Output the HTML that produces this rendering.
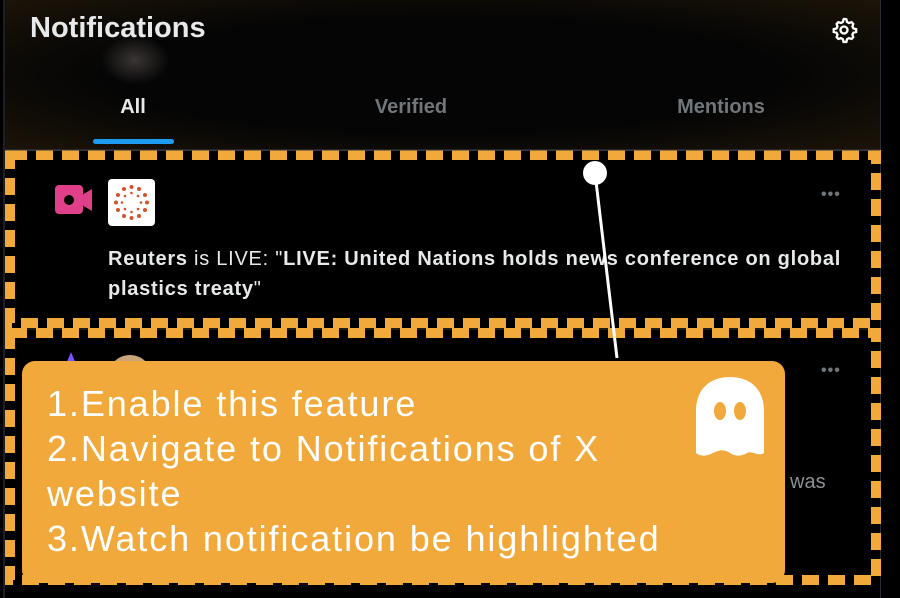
<!DOCTYPE html>
<html><head><meta charset="utf-8"><style>
*{margin:0;padding:0;box-sizing:border-box}
body{width:900px;height:598px;background:#000;overflow:hidden;position:relative;font-family:"Liberation Sans",sans-serif}
.hdr{position:absolute;left:5px;top:0;width:875px;height:150px;background:radial-gradient(ellipse at 50% 50%,#050505 55%,#1c1408 100%)}
.blur{position:absolute;left:95px;top:35px;width:70px;height:50px;border-radius:50%;background:radial-gradient(#3a3534,transparent 70%)}
.abs{position:absolute}
.t{color:#e7e9ea;font-weight:bold}
.tab{position:absolute;top:96px;font-size:20px;font-weight:bold;color:#71767b;transform:translateX(-50%)}
</style></head><body>
<div class="abs" style="left:3px;top:0;width:2px;height:598px;background:#1e1f26"></div>
<div class="abs" style="left:880px;top:0;width:1px;height:598px;background:#2a2d33"></div>
<div class="hdr"><div class="blur"></div></div>
<div class="abs t" style="left:30px;top:12px;font-size:29px">Notifications</div>
<svg class="abs" style="left:830px;top:16px" width="28" height="28" viewBox="0 0 24 24"><path fill="none" stroke="#fff" stroke-width="2" d="M12 2.5l2 .3.6 2.3 1.6.9 2.3-.7 1.4 1.5-.7 2.3.9 1.6 2.3.6v2.4l-2.3.6-.9 1.6.7 2.3-1.4 1.5-2.3-.7-1.6.9-.6 2.3h-2.4l-.6-2.3-1.6-.9-2.3.7-1.4-1.5.7-2.3-.9-1.6-2.3-.6v-2.4l2.3-.6.9-1.6-.7-2.3 1.4-1.5 2.3.7 1.6-.9.6-2.3z"/><circle cx="12" cy="12" r="3" fill="none" stroke="#fff" stroke-width="2"/></svg>
<div class="tab" style="left:133px;color:#e7e9ea">All</div>
<div class="tab" style="left:411px">Verified</div>
<div class="tab" style="left:721px">Mentions</div>
<div class="abs" style="left:93px;top:139px;width:81px;height:5px;border-radius:3px;background:#1d9bf0"></div>
<div class="abs" style="left:5px;top:150px;width:875px;height:1px;background:#2f3336"></div>

<svg class="abs" style="left:55px;top:185px" width="38" height="30" viewBox="0 0 38 30"><rect x="0" y="0" width="28" height="29" rx="4" fill="#e0408a"/><circle cx="14" cy="15" r="5" fill="#000"/><path d="M27 10l10-6v22l-10-6z" fill="#e0408a"/></svg>
<div class="abs" style="left:108px;top:179px;width:47px;height:47px;background:#fff;border-radius:4px"></div>
<svg class="abs" style="left:110px;top:181px" width="43" height="43" viewBox="0 0 43 43">
<g fill="#d4542a">
<circle cx="21.5" cy="6" r="2"/><circle cx="29" cy="8" r="2"/><circle cx="35" cy="14" r="2"/><circle cx="37" cy="21.5" r="2"/><circle cx="35" cy="29" r="2"/><circle cx="29" cy="35" r="2"/><circle cx="21.5" cy="37" r="2"/><circle cx="14" cy="35" r="2"/><circle cx="8" cy="29" r="2"/><circle cx="6" cy="21.5" r="2"/><circle cx="8" cy="14" r="2"/><circle cx="14" cy="8" r="2"/>
<circle cx="21.5" cy="12" r="1.3"/><circle cx="28" cy="15" r="1.3"/><circle cx="31" cy="21.5" r="1.3"/><circle cx="28" cy="28" r="1.3"/><circle cx="21.5" cy="31" r="1.3"/><circle cx="15" cy="28" r="1.3"/><circle cx="12" cy="21.5" r="1.3"/><circle cx="15" cy="15" r="1.3"/>
</g></svg>
<div class="abs" style="left:821px;top:186px;color:#71767b;font-size:16px;letter-spacing:1px;font-weight:bold">•••</div>
<div class="abs" style="left:108px;top:244px;width:750px;font-size:20px;line-height:30px;letter-spacing:0.75px;color:#e7e9ea"><b>Reuters</b> is LIVE: "<b>LIVE: United Nations holds news conference on global plastics treaty</b>"</div>

<div class="abs" style="left:66px;top:352px;width:10px;height:12px;background:#7856ff;clip-path:polygon(50% 0,100% 100%,0 100%)"></div>
<div class="abs" style="left:108px;top:355px;width:44px;height:44px;border-radius:50%;background:#c9a57a"></div>
<div class="abs" style="left:821px;top:362px;color:#71767b;font-size:16px;letter-spacing:1px;font-weight:bold">•••</div>
<div class="abs" style="left:790px;top:471px;color:#8b8f94;font-size:20px">was</div>

<svg class="abs" style="left:0;top:0" width="900" height="598">
<line x1="5" y1="329" x2="880" y2="329" stroke="#3a3d42" stroke-width="1"/>
<rect x="10" y="155" width="866" height="168" fill="none" stroke="#f2a93b" stroke-width="10" stroke-dasharray="17 9"/>
<rect x="10" y="333" width="866" height="247" fill="none" stroke="#f2a93b" stroke-width="10" stroke-dasharray="17 9"/>
<line x1="5" y1="150" x2="880" y2="150" stroke="#3a3d42" stroke-width="1"/>
<line x1="595" y1="173" x2="617" y2="358" stroke="#fff" stroke-width="3"/>
<circle cx="595" cy="173" r="12" fill="#fff"/>
</svg>

<div class="abs" style="left:22px;top:361px;width:763px;height:222px;background:#f2a93b;border-radius:13px"></div>
<div class="abs" style="left:47px;top:381px;color:#fff;font-size:36px;line-height:45px;letter-spacing:1.9px;white-space:nowrap">1.Enable this feature<br>2.Navigate to Notifications of X<br>website<br>3.Watch notification be highlighted</div>
<svg class="abs" style="left:694px;top:375px" width="72" height="82" viewBox="0 0 72 82"><path d="M2 78V36C2 14 16 2 36 2s34 12 34 34v42c-6 4-12-3-17 0s-11 4-17 0-11-3-17 0-12 4-17 0z" fill="#fff"/><ellipse cx="26" cy="36" rx="6" ry="9" fill="#f2a93b"/><ellipse cx="46" cy="36" rx="6" ry="9" fill="#f2a93b"/></svg>
</body></html>
